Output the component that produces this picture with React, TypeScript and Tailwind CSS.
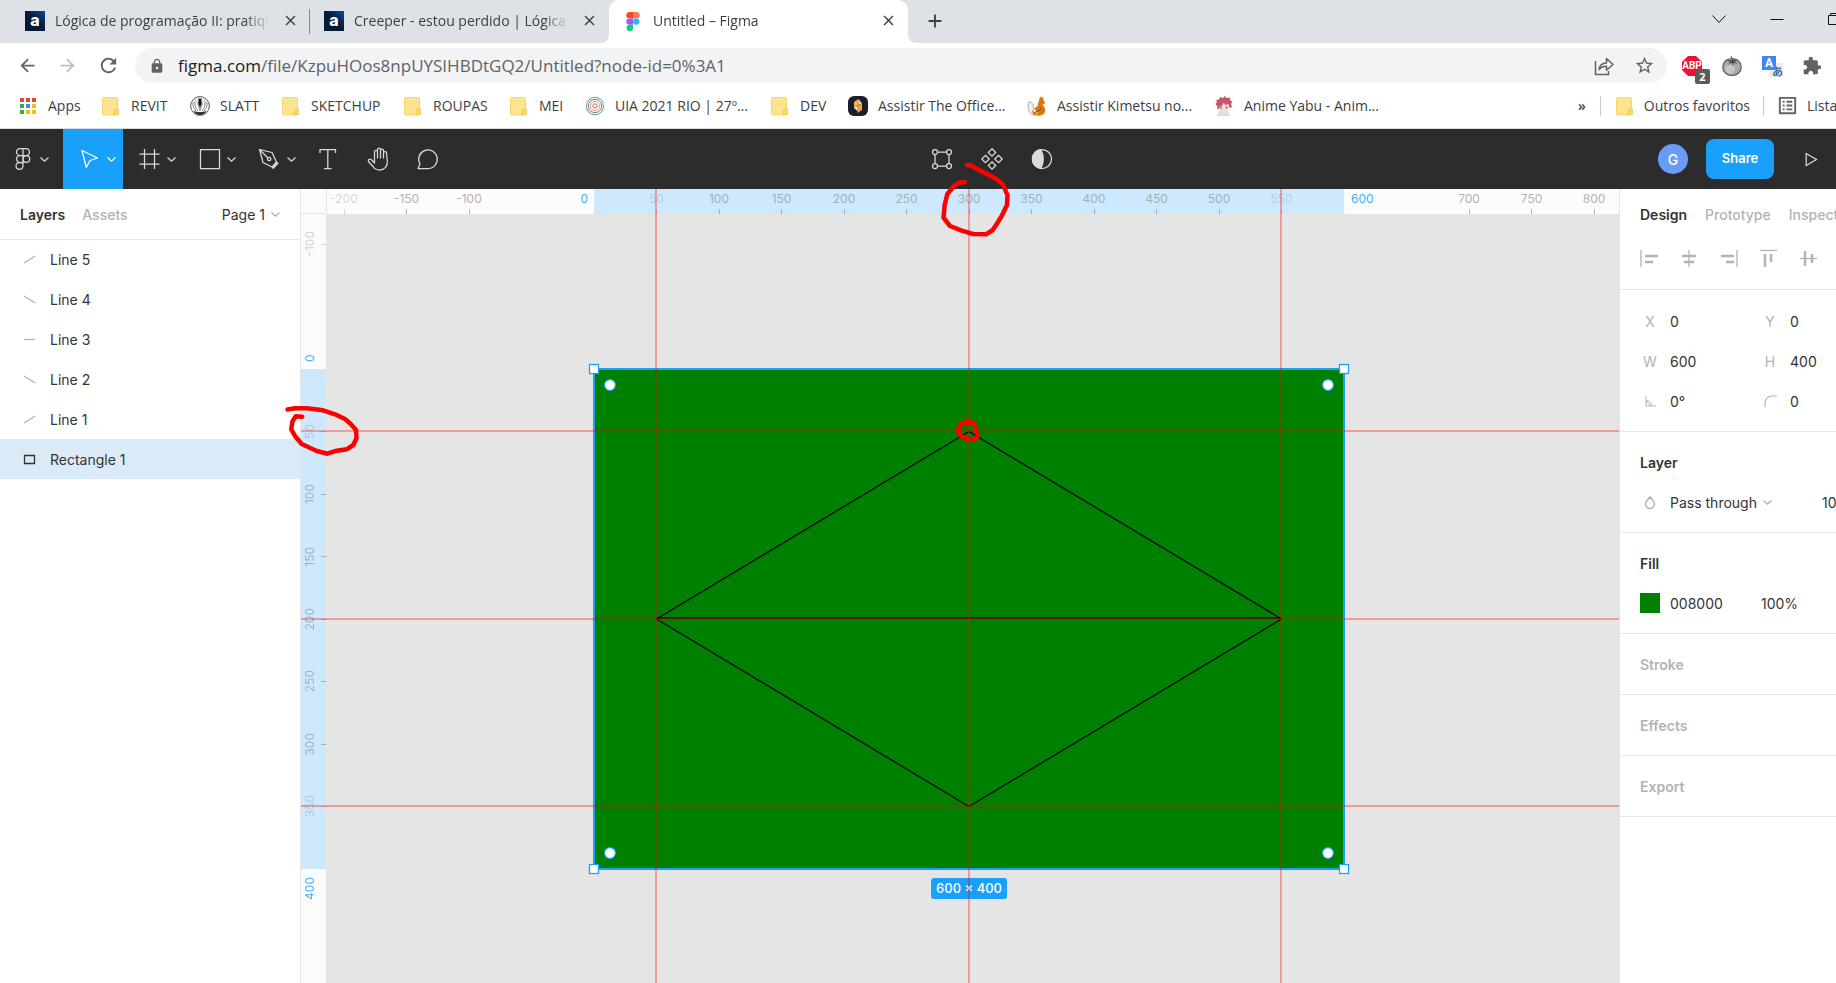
import { useState } from "react";
import type { ReactNode } from "react";
import {
  MdAdd,
  MdArrowBack,
  MdArrowForward,
  MdClose,
  MdExtension,
  MdLock,
  MdOutlineListAlt,
  MdRefresh,
  MdStarBorder,
} from "react-icons/md";

// Canvas zoom and the position of the (0, 0) point inside the canvas area
const SCALE = 1.25;
const ORIGIN_X = 293;
const ORIGIN_Y = 180;

const toX = (v: number) => ORIGIN_X + v * SCALE;
const toY = (v: number) => ORIGIN_Y + v * SCALE;

/* ---------- Browser chrome ---------- */

function AluraIcon() {
  return (
    <span className="flex size-5 shrink-0 items-center justify-center bg-linear-to-bl from-[#0a4b9c] via-[#051933] to-[#051933] pb-[2px] font-['Inter',sans-serif] text-[16px] leading-none font-extrabold text-white">
      a
    </span>
  );
}

function FigmaColorIcon() {
  return (
    <svg className="size-5 shrink-0" viewBox="0 0 20 20">
      <path fill="#f24e1e" d="M10 1H6.500a3.200 3.200 0 0 0 0 6.400H10z" />
      <path fill="#ff7262" d="M10 1h3.500a3.200 3.200 0 0 1 0 6.400H10z" />
      <path fill="#a259ff" d="M10 7.400H6.500a3.200 3.200 0 0 0 0 6.400H10z" />
      <circle fill="#1abcfe" cx="13.300" cy="10.600" r="3.200" />
      <path fill="#0acf83" d="M10 13.800H6.500a3.200 3.200 0 1 0 3.500 3.200z" />
    </svg>
  );
}

interface TabProps {
  title: string;
  icon: ReactNode;
  active?: boolean;
  separator?: boolean;
}

function BrowserTab({ title, icon, active, separator }: TabProps) {
  return (
    <div
      className={`relative flex h-[43px] w-[299px] min-w-0 items-center gap-[10px] pr-[10px] pb-[2px] pl-[14px] ${active ? "rounded-t-[10px] bg-white" : ""}`}
    >
      {active && (
        <>
          <span className="absolute bottom-0 -left-[8px] size-2 bg-white">
            <span className="block size-2 rounded-br-lg bg-[#dee1e6]" />
          </span>
          <span className="absolute -right-[8px] bottom-0 size-2 bg-white">
            <span className="block size-2 rounded-bl-lg bg-[#dee1e6]" />
          </span>
        </>
      )}
      {icon}
      <span className="min-w-0 flex-1 overflow-hidden text-[14px] whitespace-nowrap text-[#3c4043] [mask-image:linear-gradient(to_right,#000_88%,transparent)]">
        {title}
      </span>
      <button aria-label={`Fechar ${title}`} className="flex size-5 items-center justify-center text-[#3c4043]">
        <MdClose size={17} />
      </button>
      {separator && <span className="absolute top-[9px] right-0 h-[25px] w-px bg-[#80868b]" />}
    </div>
  );
}

function TabStrip() {
  return (
    <div className="flex h-[43px] shrink-0 items-start bg-[#dee1e6] pl-[11px]">
      <BrowserTab title="Lógica de programação II: pratique" icon={<AluraIcon />} separator />
      <BrowserTab title="Creeper - estou perdido | Lógica de" icon={<AluraIcon />} />
      <BrowserTab title="Untitled – Figma" icon={<FigmaColorIcon />} active />
      <button aria-label="Nova guia" className="ml-[16px] flex h-[43px] w-5 items-center pb-[2px] text-[#3c4043]">
        <MdAdd size={22} className="shrink-0" />
      </button>
      <div className="ml-auto flex h-[37px] items-center gap-[44px] text-[#111]">
        <button aria-label="Pesquisar guias">
          <svg className="size-[14px]" viewBox="0 0 14 14" fill="none" stroke="currentColor">
            <path d="M.5 3.500l6.500 7 6.500-7" />
          </svg>
        </button>
        <button aria-label="Minimizar">
          <svg className="size-[14px]" viewBox="0 0 14 14" fill="none" stroke="currentColor">
            <path d="M.5 7.500h13" />
          </svg>
        </button>
        <button aria-label="Restaurar" className="w-2 overflow-hidden">
          <svg className="size-[14px] max-w-none" viewBox="0 0 14 14" fill="none" stroke="currentColor">
            <path d="M.5 3.500h9v9h-9zM2.500 3.500v-2h9v9h-2" />
          </svg>
        </button>
      </div>
    </div>
  );
}

function AbpIcon() {
  return (
    <span className="relative flex size-5 items-center justify-center">
      <svg className="absolute inset-0 size-5" viewBox="0 0 20 20">
        <path fill="#f40d37" d="M6 0h8l6 6v8l-6 6H6l-6-6V6z" />
      </svg>
      <span className="relative font-['Roboto',sans-serif] text-[10px] leading-none font-bold text-white">ABP</span>
      <span className="absolute top-[13px] left-[13px] flex size-[15px] items-center justify-center rounded-[2px] bg-[#5b5b5b] text-[11px] leading-none font-bold text-white">
        2
      </span>
    </span>
  );
}

function TomatoIcon() {
  return (
    <svg className="size-5" viewBox="0 0 20 20">
      <ellipse cx="10" cy="11" rx="9.300" ry="8.500" fill="#a9a9a9" stroke="#5f5f5f" strokeWidth="1.200" />
      <ellipse cx="8" cy="13" rx="5" ry="4.500" fill="#c6c6c6" />
      <path
        d="M10 4.500 3.500 3.800 8 5.800 6 9l3.500-2.500L11 10l.8-3.600L16 8l-3.200-2.800 3.700-2L11 3.800 9.500 0l-.8.300z"
        fill="#4a4a4a"
      />
    </svg>
  );
}

function TranslateIcon() {
  return (
    <span className="relative block size-5">
      <span className="absolute top-[7px] left-[7px] flex size-[14px] items-end justify-end bg-[#e8eef4] font-['Noto_Sans_CJK_JP',sans-serif] text-[11px] leading-none font-bold text-[#46708c]">
        あ
      </span>
      <span className="absolute top-0 left-0 flex size-[14px] items-center justify-center bg-[#4285f4] font-['Roboto',sans-serif] text-[12px] leading-none font-bold text-white">
        A
      </span>
    </span>
  );
}

function AddressBar() {
  return (
    <div className="flex h-[45px] shrink-0 items-center bg-white pr-[14px] pl-[17px]">
      <div className="flex items-center gap-[19px] text-[#5f6368]">
        <button aria-label="Voltar">
          <MdArrowBack size={21} />
        </button>
        <button aria-label="Avançar" className="text-[#babcbe]">
          <MdArrowForward size={21} />
        </button>
        <button aria-label="Recarregar">
          <MdRefresh size={23} />
        </button>
      </div>
      <div className="mx-[15px] flex h-[35px] min-w-0 flex-1 items-center rounded-full bg-[#f1f3f4] pr-[12px] pl-[14px] text-[#5f6368]">
        <MdLock size={16} className="shrink-0" />
        <span className="ml-[13px] min-w-0 flex-1 truncate text-[17px]">
          <span className="text-[#202124]">figma.com</span>/file/KzpuHOos8npUYSIHBDtGQ2/Untitled?node-id=0%3A1
        </span>
        <button aria-label="Compartilhar" className="mr-[20px]">
          <svg className="size-5" viewBox="0 0 20 20" fill="none" stroke="currentColor" strokeWidth="1.500">
            <path d="M1.500 5v13.500h13V15" />
            <path d="M5 13.500c.4-4.200 2.800-6.300 7.500-6.500V2.500l6.500 6-6.500 5.800v-4c-3.500 0-5.600.9-7.500 3.200z" strokeLinejoin="round" />
          </svg>
        </button>
        <button aria-label="Favoritar">
          <MdStarBorder size={21} />
        </button>
      </div>
      <div className="flex items-center gap-5">
        <AbpIcon />
        <TomatoIcon />
        <TranslateIcon />
        <MdExtension size={20} className="text-[#5f6368]" />
      </div>
    </div>
  );
}

function FolderIcon() {
  return (
    <svg className="h-5 w-5" viewBox="0 0 20 20">
      <path d="M2.500 1.500h13a1 1 0 0 1 1 1V18a1 1 0 0 1-1 1h-13a1 1 0 0 1-1-1V2.500a1 1 0 0 1 1-1z" fill="#ffe48f" stroke="#f9d56b" />
      <path d="M14 13h3.500v5.500h-5z" fill="#ffd95e" stroke="#efc44a" strokeWidth=".7" />
    </svg>
  );
}

function AppsIcon() {
  const colors = ["#ea4335", "#ea4335", "#ea4335", "#34a853", "#4285f4", "#fbbc04", "#34a853", "#fbbc04", "#fbbc04"];
  return (
    <svg className="size-5" viewBox="0 0 20 20">
      {colors.map((c, i) => (
        <rect key={i} x={2 + (i % 3) * 6} y={2 + Math.floor(i / 3) * 6} width="4" height="4" fill={c} />
      ))}
    </svg>
  );
}

function SlattIcon() {
  return (
    <svg className="size-5" viewBox="0 0 20 20">
      <circle cx="10" cy="10" r="9.400" fill="#fff" stroke="#555" />
      <path d="M8 2h4l.7 6L10 16 7.300 8z" fill="#999" />
      <path d="M9 3h2l.4 5L10 11 8.600 8z" fill="#111" />
      <path d="M5.500 4c-1.500 4 0 8 2.500 11M14.500 4c1.500 4 0 8-2.500 11M3 6c-.5 4 1 7 3 9M17 6c.5 4-1 7-3 9" stroke="#888" fill="none" />
      <path d="M3.500 14.500c3 2 10 2 13 0-1 3-4 4.500-6.500 4.500s-5.500-1.500-6.500-4.500z" fill="#333" />
    </svg>
  );
}

function UiaIcon() {
  return (
    <svg className="size-5" viewBox="0 0 20 20" fill="none">
      <circle cx="10" cy="10" r="8.600" stroke="#6fba7d" strokeWidth="1.200" />
      <circle cx="10" cy="10" r="6.600" stroke="#8d6cab" />
      <circle cx="10" cy="10" r="4.600" stroke="#f09a6a" />
      <circle cx="10" cy="10" r="2.200" stroke="#e0605f" />
    </svg>
  );
}

function OfficeIcon() {
  return (
    <svg className="size-5" viewBox="0 0 20 20">
      <rect width="20" height="20" rx="6" fill="#1c1f2b" />
      <path d="M10.500 3 6 6v6l4.500-3z" fill="#ffb04d" />
      <path d="M14 7.500 9.500 10v7L14 14z" fill="#f9a13a" />
      <path d="m6 12 3.500 3V10z" fill="#fff0dc" />
      <path d="m10.500 3 3.500 4.500L10.500 9z" fill="#ffd9a3" />
    </svg>
  );
}

function FoxIcon() {
  return (
    <svg className="size-5" viewBox="0 0 20 20">
      <path
        d="M12.500 2.500 13 .5l1.500 1.200L16 .5l.6 3.700 1.700 3-2.800 1.600c2.500 2.500 3.500 5.700 2 8.200-1.500 2.300-5 3-8.500 2.500l2-3-4-4.500c2.500-.3 4-1.800 4-4z"
        fill="#d9780f"
      />
      <path d="M2 5.500C4.500 6 6.500 8 6.300 10.500c-.2 2 1 3.500 3.200 4.500l-1 4C5 19 2.500 17 1.500 13.500.8 10.500 1 8 2 5.500z" fill="#f1f1f1" stroke="#8a8a8a" strokeWidth=".7" />
      <path d="M5 13.500c1 2 3 3 5.500 2.500l-2 3.500C6 19 5 16.500 5 13.500z" fill="#d9780f" />
      <path d="M9 15.500c2.500 0 4.500-1 5-3.500" stroke="#7c4207" fill="none" />
    </svg>
  );
}

function AnimeIcon() {
  return (
    <svg className="size-5" viewBox="0 0 20 20">
      <path d="M5 15h9l2 5H3z" fill="#dcdce8" />
      <circle cx="10" cy="10.500" r="5.500" fill="#f7dcd2" />
      <path d="M1.500 8 3 6 2 4l3-.5L6 1l3 1 2-2 1.500 2L16 1.500 16 4l2.500 2L17 8l1 3-2.500 1-1-4-3 1-2-2-2 3-2 .500-.500 3-2-1 .500-2z" fill="#c65371" />
      <path d="M7 10.500v2M12.500 10.500v2" stroke="#555" strokeWidth="1.300" />
    </svg>
  );
}

const BOOKMARKS = [
  { label: "Apps", icon: <AppsIcon />, width: "w-[83px]" },
  { label: "REVIT", icon: <FolderIcon />, width: "w-[89px]" },
  { label: "SLATT", icon: <SlattIcon />, width: "w-[91px]" },
  { label: "SKETCHUP", icon: <FolderIcon />, width: "w-[122px]" },
  { label: "ROUPAS", icon: <FolderIcon />, width: "w-[106px]" },
  { label: "MEI", icon: <FolderIcon />, width: "w-[76px]" },
  { label: "UIA 2021 RIO | 27º...", icon: <UiaIcon />, width: "w-[185px]" },
  { label: "DEV", icon: <FolderIcon />, width: "w-[78px]" },
  { label: "Assistir The Office...", icon: <OfficeIcon />, width: "w-[179px]" },
  { label: "Assistir Kimetsu no...", icon: <FoxIcon />, width: "w-[187px]" },
  { label: "Anime Yabu - Anim...", icon: <AnimeIcon />, width: "w-[180px]" },
];

function BookmarksBar() {
  return (
    <nav className="flex h-[41px] shrink-0 items-center overflow-hidden border-b border-[#dadce0] bg-white pb-[5px] pl-[18px] text-[14px] whitespace-nowrap text-[#3c4043]">
      {BOOKMARKS.map((b) => (
        <a key={b.label} href="#" className={`flex shrink-0 items-center gap-[10px] ${b.width}`}>
          {b.icon}
          {b.label}
        </a>
      ))}
      <div className="ml-auto flex shrink-0 items-center">
        <button aria-label="Mais favoritos" className="mr-[14px] text-[14px] leading-5 font-semibold">
          »
        </button>
        <span className="h-5 w-px bg-[#c6c9cd]" />
        <a href="#" className="ml-[14px] flex items-center gap-[9px]">
          <FolderIcon />
          Outros favoritos
        </a>
        <span className="ml-[13px] h-5 w-px bg-[#c6c9cd]" />
        <a href="#" className="ml-[12px] flex w-[60px] items-center gap-[8px] overflow-hidden">
          <MdOutlineListAlt size={23} className="shrink-0 text-[#5f6368]" />
          Lista de leitura
        </a>
      </div>
    </nav>
  );
}

/* ---------- Figma toolbar ---------- */

function Chevron({ className = "" }: { className?: string }) {
  return (
    <svg className={`h-[5px] w-[9px] shrink-0 ${className}`} viewBox="0 0 9 5" fill="none" stroke="currentColor">
      <path d="M.5.500l4 3.700 4-3.700" strokeWidth="1.200" />
    </svg>
  );
}

function ToolIcon({ children }: { children: ReactNode }) {
  return (
    <svg className="size-6 shrink-0" viewBox="0 0 24 24" fill="none" stroke="currentColor" strokeWidth="1.250">
      {children}
    </svg>
  );
}

const MENU_TOOLS = [
  {
    name: "Frame",
    icon: <path d="M6.500 2v20M16.500 2v20M1.500 7h20M1.500 17h20" />,
  },
  {
    name: "Rectangle",
    icon: <path d="M2.500 2.500h19v19h-19z" />,
  },
  {
    name: "Pen",
    icon: (
      <>
        <path d="M1.500 2.500l12.500 3 4.500 9.500-4.500 5-9-4.500z" strokeLinejoin="round" />
        <path d="M1.500 2.500l8.500 8.500" />
        <circle cx="11.200" cy="12" r="1.700" />
        <path d="M14.500 21.500l5.500-6" strokeWidth="2" />
      </>
    ),
  },
];

const PLAIN_TOOLS = [
  {
    name: "Text",
    icon: <path d="M4 6V2.700h15.500V6M11.800 2.700v18.800M8 21.500h7.500" />,
  },
  {
    name: "Hand",
    icon: (
      <path
        d="M7.500 13V4.800a1.500 1.500 0 0 1 3 0V11 2.500a1.500 1.500 0 0 1 3 0V11 3.500a1.500 1.500 0 0 1 3 0V11 6a1.500 1.500 0 0 1 3 0l.8 8c.5 5-2.800 9-7.600 9-3.200 0-5.200-1.200-6.700-3.500L1.500 14.500c-.8-1.500 1-3.200 2.700-2L7.500 16z"
        transform="translate(1 0)"
        strokeLinejoin="round"
      />
    ),
  },
  {
    name: "Comment",
    icon: <path d="M2 21.500l2-4.500A9.300 9.300 0 1 1 12.500 21.500z" strokeLinejoin="round" />,
  },
];

function FigmaToolbar() {
  return (
    <header className="flex h-[60px] shrink-0 bg-[#2c2c2c] font-['Inter',sans-serif] text-[#dadada]">
      <button aria-label="Main menu" className="flex w-[63px] items-center gap-[5px] pl-[11px]">
        <ToolIcon>
          <path d="M12 1.500H9a3.500 3.500 0 0 0 0 7h3zM12 1.500h3a3.500 3.500 0 0 1 0 7h-3zM12 8.500H9a3.500 3.500 0 0 0 0 7h3z" />
          <circle cx="15.300" cy="12" r="3.400" />
          <path d="M12 15.500H9a3.500 3.500 0 1 0 3 3.500z" />
        </ToolIcon>
        <Chevron />
      </button>
      <button aria-label="Move" className="flex w-[60px] items-center gap-[6px] bg-[#18a0fb] pl-[14px] text-white">
        <ToolIcon>
          <path d="M5 3.500l15.500 7.500-7.500 2.500-3.700 7z" strokeLinejoin="round" />
        </ToolIcon>
        <Chevron />
      </button>
      {MENU_TOOLS.map((t) => (
        <button key={t.name} aria-label={t.name} className="flex w-[60px] items-center gap-[5px] pl-[15px]">
          <ToolIcon>{t.icon}</ToolIcon>
          <Chevron />
        </button>
      ))}
      {PLAIN_TOOLS.map((t) => (
        <button key={t.name} aria-label={t.name} className="flex w-[50px] items-center justify-center">
          <ToolIcon>{t.icon}</ToolIcon>
        </button>
      ))}

      <div className="grow-[11]" />
      <button aria-label="Edit object" className="flex w-[50px] items-center justify-center">
        <ToolIcon>
          <path d="M7.500 5h9M7.500 19h9M5 7.500v9M19 7.500v9" />
          <circle cx="5" cy="5" r="2.500" />
          <circle cx="19" cy="5" r="2.500" />
          <circle cx="5" cy="19" r="2.500" />
          <circle cx="19" cy="19" r="2.500" />
        </ToolIcon>
      </button>
      <button aria-label="Create component" className="flex w-[50px] items-center justify-center">
        <ToolIcon>
          <path d="M12 1.800l3.700 3.700L12 9.200 8.300 5.500zM12 14.800l3.700 3.700-3.700 3.700-3.700-3.700zM5.500 8.300L9.200 12l-3.700 3.700L1.800 12zM18.500 8.300l3.700 3.700-3.700 3.700-3.700-3.700z" />
        </ToolIcon>
      </button>
      <button aria-label="Use as mask" className="flex w-[50px] items-center justify-center">
        <ToolIcon>
          <circle cx="12" cy="12" r="9.500" />
          <path d="M10.500 2.600c3.600 5 3.600 13.800 0 18.800A9.500 9.500 0 0 1 10.500 2.600z" fill="currentColor" />
        </ToolIcon>
      </button>
      <div className="grow-[14]" />

      <div className="flex items-center pr-[18px]">
        <span className="flex size-[30px] items-center justify-center rounded-full bg-[#699bf7] text-[14px] font-medium text-white">
          G
        </span>
        <button className="ml-[18px] h-10 w-[68px] rounded-lg bg-[#18a0fb] text-[13px] font-semibold text-white">
          Share
        </button>
        <button aria-label="Present" className="ml-[31px]">
          <svg className="h-[15px] w-[13px]" viewBox="0 0 13 15" fill="none" stroke="currentColor" strokeWidth="1.250">
            <path d="M1.200 1.500v12l10.300-6z" />
          </svg>
        </button>
      </div>
    </header>
  );
}

/* ---------- Layers panel ---------- */

const LAYERS = [
  { name: "Line 5", d: "M1 10L12 3" },
  { name: "Line 4", d: "M1 3l11 7" },
  { name: "Line 3", d: "M1 6.500h11" },
  { name: "Line 2", d: "M1 3l11 7" },
  { name: "Line 1", d: "M1 10L12 3" },
  { name: "Rectangle 1", d: "M1.500 2.500h10v8h-10z" },
];

function LayersPanel() {
  const [selected, setSelected] = useState("Rectangle 1");

  return (
    <aside className="w-[301px] shrink-0 border-r border-[#e5e5e5] bg-white text-[14px] text-[#333]">
      <div className="relative flex h-[50px] items-center px-5 shadow-[0_1px_0_#e5e5e5]">
        <button className="font-semibold">Layers</button>
        <button className="ml-[17px] font-medium text-[#b3b3b3]">Assets</button>
        <button className="ml-auto flex items-center gap-[6px]">
          Page 1 <Chevron className="text-[#aaa]" />
        </button>
      </div>
      <ul>
        {LAYERS.map((l) => (
          <li key={l.name}>
            <button
              onClick={() => setSelected(l.name)}
              className={`flex h-10 w-full items-center gap-[14px] pl-[23px] text-left ${selected === l.name ? "bg-[#daebf7]" : ""}`}
            >
              <svg
                className={`size-[13px] ${selected === l.name ? "text-[#333]" : "text-[#b3b3b3]"}`}
                viewBox="0 0 13 13"
                fill="none"
                stroke="currentColor"
                strokeWidth="1.300"
              >
                <path d={l.d} />
              </svg>
              {l.name}
            </button>
          </li>
        ))}
      </ul>
    </aside>
  );
}

/* ---------- Canvas ---------- */

const H_MARKS = [-200, -150, -100, 50, 100, 150, 200, 250, 300, 350, 400, 450, 500, 550, 700, 750, 800];
const V_MARKS = [-100, 50, 100, 150, 200, 250, 300, 350, 500];
const FADED = [-200, 50, 550];

function TopRuler() {
  return (
    <div className="relative h-[25px] shrink-0 overflow-hidden bg-[#fcfcfc] text-[12px] leading-[19px] text-[#b3b3b3]">
      <div className="absolute inset-y-0 bg-[#cee9fd]" style={{ left: toX(0), width: 600 * SCALE }} />
      {H_MARKS.map((v) => (
        <div
          key={v}
          className={`absolute top-0 flex h-full w-10 -translate-x-1/2 flex-col items-center justify-between ${FADED.includes(v) ? "opacity-50" : ""} ${v > 0 && v < 600 ? "text-[#9fb1be]" : ""}`}
          style={{ left: toX(v) }}
        >
          <span>{v}</span>
          <span className="h-[5px] w-px bg-current" />
        </div>
      ))}
      <span className="absolute top-0 w-10 -translate-x-full pr-[6px] text-right text-[#42b0fb]" style={{ left: toX(0) }}>
        0
      </span>
      <span className="absolute top-0 pl-[7px] text-[#42b0fb]" style={{ left: toX(600) }}>
        600
      </span>
      <div className="absolute inset-y-0 left-0 w-[26px] border-r border-b border-[#e5e5e5] bg-[#fcfcfc]" />
    </div>
  );
}

function LeftRuler() {
  // The ruler starts under the 25px top ruler
  const top = (v: number) => toY(v) - 25;
  return (
    <div className="relative w-[25px] shrink-0 overflow-hidden bg-[#fcfcfc] text-[12px] leading-[18px] text-[#b3b3b3]">
      <div className="absolute inset-x-0 bg-[#cee9fd]" style={{ top: top(0), height: 400 * SCALE }} />
      {V_MARKS.map((v) => (
        <div
          key={v}
          className={`absolute left-0 flex h-10 w-full -translate-y-1/2 items-center justify-between ${v === 50 || v === 350 || v === -100 ? "opacity-60" : ""} ${v > 0 && v < 400 ? "text-[#9fb1be]" : ""}`}
          style={{ top: top(v) }}
        >
          <span className="rotate-180 [writing-mode:vertical-rl]">{v}</span>
          <span className="h-px w-[5px] bg-current" />
        </div>
      ))}
      <span
        className="absolute left-0 -translate-y-full rotate-180 pt-[7px] text-[#42b0fb] [writing-mode:vertical-rl]"
        style={{ top: top(0) }}
      >
        0
      </span>
      <span
        className="absolute left-0 rotate-180 pb-2 text-[#42b0fb] [writing-mode:vertical-rl]"
        style={{ top: top(400) }}
      >
        400
      </span>
    </div>
  );
}

function Artboard() {
  const corners = [
    [0, 0],
    [600, 0],
    [0, 400],
    [600, 400],
  ];
  return (
    <>
      <svg className="absolute inset-0 h-full w-full">
        <rect x={toX(0)} y={toY(0)} width={600 * SCALE} height={400 * SCALE} fill="#008000" stroke="#18a0fb" strokeWidth="2" />
        <g stroke="#000" strokeWidth="1.250">
          <line x1={toX(50)} y1={toY(200)} x2={toX(300)} y2={toY(50)} />
          <line x1={toX(300)} y1={toY(50)} x2={toX(550)} y2={toY(200)} />
          <line x1={toX(50)} y1={toY(200) - 1} x2={toX(550)} y2={toY(200) - 1} />
          <line x1={toX(50)} y1={toY(200)} x2={toX(300)} y2={toY(350)} />
          <line x1={toX(300)} y1={toY(350)} x2={toX(550)} y2={toY(200)} />
        </g>
        {corners.map(([x, y]) => (
          <g key={`${x}-${y}`} fill="#fff" stroke="#18a0fb">
            <rect x={toX(x) - 4.5} y={toY(y) - 4.5} width="9" height="9" strokeWidth="1.250" />
            <circle cx={toX(x) + (x ? -16 : 16)} cy={toY(y) + (y ? -16 : 16)} r="5.500" strokeWidth="1.250" />
          </g>
        ))}
      </svg>
      <span
        className="absolute mt-[9px] -translate-x-1/2 rounded-[3px] bg-[#18a0fb] px-[5px] text-[13px] leading-[21px] font-medium whitespace-nowrap text-white"
        style={{ left: toX(300), top: toY(400) }}
      >
        600 × 400
      </span>
      <svg className="absolute inset-0 h-full w-full" stroke="#ff0000" strokeOpacity=".32" strokeWidth="2">
        {[50, 300, 550].map((v) => (
          <line key={v} x1={Math.floor(toX(v))} x2={Math.floor(toX(v))} y1="0" y2="100%" />
        ))}
        {[50, 200, 350].map((v) => (
          <line key={v} x1="0" x2="100%" y1={Math.floor(toY(v))} y2={Math.floor(toY(v))} />
        ))}
      </svg>
    </>
  );
}

function Canvas() {
  return (
    <main className="relative flex min-w-0 flex-1 flex-col overflow-hidden bg-[#e5e5e5]">
      <TopRuler />
      <div className="flex flex-1">
        <LeftRuler />
      </div>
      <Artboard />
    </main>
  );
}

/* ---------- Design panel ---------- */

const ALIGNMENTS = [
  { name: "Align left", thin: "M2 2v17", thick: "M6 8h13M6 14h8" },
  { name: "Align horizontal centers", thin: "M10 2v17", thick: "M3 8h14M5 14h10" },
  { name: "Align right", thin: "M18 2v17", thick: "M2 8h13M7 14h8" },
  { name: "Align top", thin: "M1 2.500h17", thick: "M6 6v13M12 6v8" },
  { name: "Align vertical centers", thin: "M1 10.500h17", thick: "M6 3v15M13 6v9" },
];

interface FieldProps {
  id: string;
  label: ReactNode;
  value: string;
}

function Field({ id, label, value }: FieldProps) {
  return (
    <div className="flex h-10 w-[120px] shrink-0 items-center">
      <label htmlFor={id} className="flex w-5 shrink-0 justify-center text-[#b3b3b3]">
        {label}
      </label>
      <input id={id} defaultValue={value} className="ml-[10px] w-[70px] bg-transparent outline-none" />
    </div>
  );
}

function CollapsedSection({ title }: { title: string }) {
  return (
    <section className="border-b border-[#e5e5e5]">
      <button className="flex h-[60px] w-full items-center pl-5 font-semibold text-[#b3b3b3]">{title}</button>
    </section>
  );
}

function DesignPanel() {
  return (
    <aside className="w-[217px] shrink-0 overflow-hidden border-l border-[#e5e5e5] bg-white text-[14px] whitespace-nowrap text-[#333]">
      <section className="border-b border-[#e5e5e5]">
        <div className="flex h-[50px] items-center gap-[18px] pl-5">
          <button className="font-semibold">Design</button>
          <button className="font-medium text-[#b3b3b3]">Prototype</button>
          <button className="font-medium text-[#b3b3b3]">Inspect</button>
        </div>
        <div className="flex h-[50px] items-start gap-[19px] pt-[9px] pl-[19px]">
          {ALIGNMENTS.map((a) => (
            <button key={a.name} aria-label={a.name} className="shrink-0 text-[#b3b3b3]">
              <svg className="size-[21px]" viewBox="0 0 21 21" fill="none" stroke="currentColor">
                <path d={a.thin} strokeWidth="1.300" />
                <path d={a.thick} strokeWidth="2.500" />
              </svg>
            </button>
          ))}
        </div>
      </section>

      <section className="border-b border-[#e5e5e5] pt-[11px] pb-[10px] pl-5">
        <div className="flex">
          <Field id="x" label="X" value="0" />
          <Field id="y" label="Y" value="0" />
        </div>
        <div className="flex">
          <Field id="w" label="W" value="600" />
          <Field id="h" label="H" value="400" />
        </div>
        <div className="flex">
          <Field
            id="rotation"
            value="0°"
            label={
              <svg className="size-[11px]" viewBox="0 0 11 11" fill="none" stroke="currentColor" role="img" aria-label="Rotation">
                <path d="M1 0v10h10M1 4.500A5.500 5.500 0 0 1 6.500 10M1 5l4.500 4.500" />
              </svg>
            }
          />
          <Field
            id="radius"
            value="0"
            label={
              <svg className="size-[13px]" viewBox="0 0 13 13" fill="none" stroke="currentColor" role="img" aria-label="Corner radius">
                <path d="M1 12V8a7 7 0 0 1 7-7h5" strokeWidth="1.200" />
              </svg>
            }
          />
        </div>
      </section>

      <section className="border-b border-[#e5e5e5] pt-[10px] pb-[10px] pl-5">
        <h2 className="flex h-10 items-center font-semibold">Layer</h2>
        <div className="flex h-10 items-center">
          <svg className="mx-[4px] h-[13px] w-3 text-[#aaa]" viewBox="0 0 12 13" fill="none" stroke="currentColor">
            <path d="M6 1l3 3.500a4.500 4.500 0 1 1-6 0z" strokeWidth="1.200" />
          </svg>
          <button className="ml-[10px] flex items-center gap-[6px]">
            Pass through <Chevron className="text-[#aaa]" />
          </button>
          <input aria-label="Layer opacity" defaultValue="100%" className="ml-auto w-[14px] shrink-0 bg-transparent outline-none" />
        </div>
      </section>

      <section className="border-b border-[#e5e5e5] pt-[10px] pb-[10px] pl-5">
        <h2 className="flex h-10 items-center font-semibold">Fill</h2>
        <div className="flex h-10 items-center">
          <button aria-label="Fill color" className="size-5 shrink-0 bg-[#008000]" />
          <input aria-label="Fill hex" defaultValue="008000" className="ml-[10px] w-[91px] bg-transparent outline-none" />
          <input aria-label="Fill opacity" defaultValue="100%" className="w-[50px] bg-transparent outline-none" />
        </div>
      </section>

      <CollapsedSection title="Stroke" />
      <CollapsedSection title="Effects" />
      <CollapsedSection title="Export" />
    </aside>
  );
}

/* ---------- Freehand marks drawn over the window ---------- */

function PenMarks() {
  return (
    <svg
      className="pointer-events-none absolute inset-0 h-full w-full"
      fill="none"
      stroke="#ff0000"
      strokeWidth="4.500"
      strokeLinecap="round"
      strokeLinejoin="round"
    >
      <path d="M967 165l4 .5 6 3.500 10 5 10 5.500 6 5.200 3 7 1.500 3.300-.5 10-5.300 11-5 8-4 6-6.700 4.300-13-.3-11.300-3.300-11.700-4.700-6.500-8.300 1.200-12.700 2.600-11 7.700-9 5.700-2.700h4.300" />
      <path d="M287.500 409.500l7.500-1.200h12l16 2 12 4 10 4.700 5.700 5 5.300 6 .5 8.300-3.200 6.700-6.600 4.300-10 1.400-9.400 3-10.600-2.700-15-7-6.700-8-3.700-6.700 1-7.600 3.400-5.400 6.600.4" />
      <path d="M963.300 422.700l4-2 4.400 1.600 4 3 .3 6.400 2 4-2.700 3-7 .6-6.600-2.600-3.400-4 .7-6.700 4.300-3.300 5 1" />
    </svg>
  );
}

export default function App() {
  return (
    <div className="relative flex h-screen flex-col overflow-hidden bg-white font-['Open_Sans','Noto_Sans',sans-serif]">
      <TabStrip />
      <AddressBar />
      <BookmarksBar />
      <FigmaToolbar />
      <div className="flex min-h-0 flex-1 font-['Inter',sans-serif]">
        <LayersPanel />
        <Canvas />
        <DesignPanel />
      </div>
      <PenMarks />
    </div>
  );
}
